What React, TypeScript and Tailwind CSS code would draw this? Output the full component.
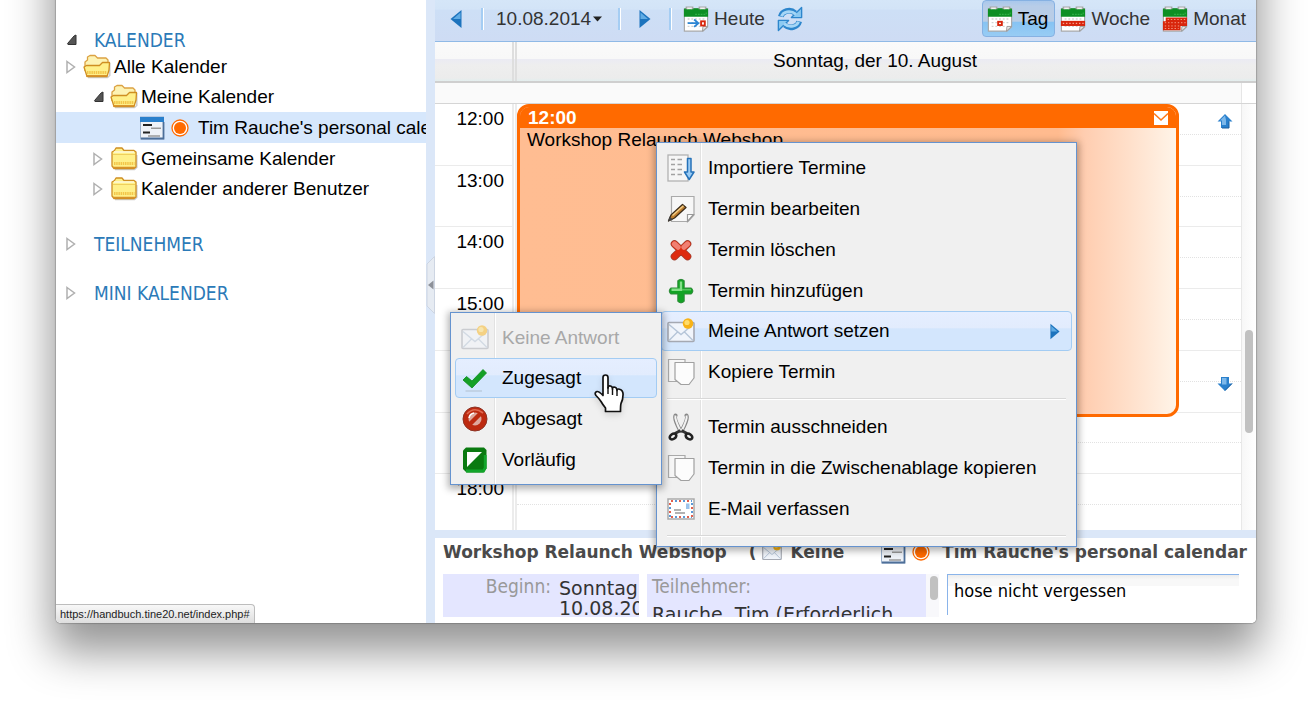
import React from "react";
import clsx from "clsx";

type IconProps = { className?: string };

/* ---------- small drawings ---------- */

function Svg({ size = 28, className, children }: { size?: number; className?: string; children: React.ReactNode }) {
  return (
    <svg width={size} height={size} viewBox="0 0 28 28" className={clsx("shrink-0", className)} aria-hidden="true">
      {children}
    </svg>
  );
}

function Expander({ open = false }: { open?: boolean }) {
  return (
    <svg width="12" height="16" viewBox="0 0 12 16" className="shrink-0" aria-hidden="true">
      {open ? (
        <path d="M11 3V12.500H3Q2 12 3 11L9 4Z" fill="#555" stroke="#333" strokeWidth="1" strokeLinejoin="round" />
      ) : (
        <path d="M2 2.500L9.500 8L2 13.500Z" fill="#fff" stroke="#b0b0b0" strokeWidth="1.500" />
      )}
    </svg>
  );
}

function Folder({ open = false }: { open?: boolean }) {
  return (
    <Svg>
      <path d="M5 24.500H24.500L26.800 22.500V10" fill="none" stroke="#aaa" strokeWidth="1.500" opacity=".6" />
      {open ? (
        <>
          <path
            d="M2 18V9L4.500 7V4L7 2.500H12L14.500 5H23L25 7V12"
            fill="#fdf3b4"
            stroke="#dca243"
            strokeWidth="1.300"
            strokeLinejoin="round"
          />
          <path
            d="M1 14L3.500 12.500H16.500L19.500 9.500H26.500L26 17L24 23.500H4Z"
            fill="#fff08a"
            stroke="#cf8f22"
            strokeWidth="1.300"
            strokeLinejoin="round"
          />
          <path d="M4 19.500H24" stroke="#f3c64a" strokeWidth="3" strokeDasharray="1.500 .7" />
          <path d="M3 22.800H24" stroke="#d8922a" strokeWidth="1.500" />
        </>
      ) : (
        <>
          <path
            d="M2 21V7L4.500 5.500L6 3H12L14 5.500H24L26 7V22L24 23.500H4Z"
            fill="#fff08a"
            stroke="#cf8f22"
            strokeWidth="1.300"
            strokeLinejoin="round"
          />
          <path d="M4 7H24" stroke="#fdf8d8" strokeWidth="1.600" />
          <path d="M3 9.500H25" stroke="#efcf5e" strokeWidth="1" />
          <path d="M4 18.500H24.500" stroke="#f3c64a" strokeWidth="3" strokeDasharray="1.500 .7" />
          <path d="M3 22.500H25" stroke="#d8922a" strokeWidth="1.500" />
        </>
      )}
    </Svg>
  );
}

function CalendarForm() {
  return (
    <svg width="26" height="24" viewBox="0 0 26 24" className="shrink-0" aria-hidden="true">
      <rect x="1.500" y="1" width="23" height="22" fill="#eef2f8" stroke="#9ab0cc" strokeWidth="1" />
      <rect x="1" y="1" width="24" height="5" fill="#2a80cc" />
      <path d="M24.500 6V22.500H2" fill="none" stroke="#4d6f99" strokeWidth="1.800" />
      <path d="M4 9H13M4 16.500H11" stroke="#222" strokeWidth="2" />
      <path d="M12 12.300H22M9 20H21" stroke="#999" strokeWidth="1.600" />
    </svg>
  );
}

function ColorDot() {
  return (
    <svg width="18" height="18" viewBox="0 0 18 18" className="shrink-0" aria-hidden="true">
      <circle cx="9" cy="9" r="8" fill="#fff" stroke="#ff6a00" strokeWidth="1.300" />
      <circle cx="9" cy="9" r="6" fill="#ff6a00" />
    </svg>
  );
}

function CalendarIcon({ kind }: { kind: "today" | "day" | "week" | "month" }) {
  return (
    <Svg size={26}>
      <path d="M1.500 3H26.500V22.500L21.500 27H1.500Z" fill="#fff" stroke="#aaa" strokeWidth="1.300" />
      <path d="M26.500 22L21.500 22L21 27Z" fill="#e8e8e8" stroke="#999" strokeWidth="1" />
      <path d="M1 4Q1 2.500 3 2.500H25Q27 2.500 27 4V11.500H1Z" fill="#0d8f24" />
      <path d="M13 9H25V6.500" fill="none" stroke="#2fae45" strokeWidth="1.200" strokeDasharray="2 1" />
      <path d="M4 3.500V1.800H10V3.500M18 3.500V1.800H24V3.500" fill="none" stroke="#a8a8a8" strokeWidth="2.400" />
      <path d="M4.500 2.600H9.500M18.500 2.600H23.500" stroke="#f2f2f2" strokeWidth="1.800" />
      {kind !== "month" && (
        <path d="M5 14H23M5 18H23M5 22H20" stroke="#d2d2d2" strokeWidth="1.400" strokeDasharray="2 2" />
      )}
      {kind === "today" && (
        <>
          <path d="M5 18.500H16M12 14.500L16.500 18.500L12 22.500" fill="none" stroke="#2d86d4" strokeWidth="2" />
          <rect x="19.500" y="16.500" width="4" height="4.500" fill="#fff" stroke="#d8250c" strokeWidth="2" />
        </>
      )}
      {kind === "day" && <rect x="12" y="17" width="4" height="3.500" fill="#fff" stroke="#d8250c" strokeWidth="2" />}
      {kind === "week" && (
        <>
          <rect x="1" y="16" width="26" height="5.500" fill="#d8250c" />
          <path d="M3 18.700H26" stroke="#f6a390" strokeWidth="1.300" strokeDasharray="1.500 2" />
        </>
      )}
      {kind === "month" && (
        <>
          <path d="M4 12.500H27V21.500H20V26H1V16.500H4Z" fill="#d8250c" />
          <path d="M6 14.500H26M3 18H26M3 21.500H20M3 24.200H18" stroke="#f6a390" strokeWidth="1" strokeDasharray="1.500 2" />
        </>
      )}
    </Svg>
  );
}

function ToolbarArrow({ dir, small }: { dir: "left" | "right"; small?: boolean }) {
  return (
    <svg
      width={small ? 10 : 12}
      height={small ? 17 : 20}
      viewBox="0 0 12 20"
      preserveAspectRatio="none"
      className="shrink-0"
      aria-hidden="true"
    >
      {dir === "left" ? (
        <>
          <path d="M11.500 1V19L.5 10Z" fill="#1c73bd" />
          <path d="M10.500 3.500V10H3Z" fill="#5fabe4" />
        </>
      ) : (
        <>
          <path d="M.5 1V19L11.500 10Z" fill="#1c73bd" />
          <path d="M1.500 3.500V10H9Z" fill="#5fabe4" />
        </>
      )}
    </svg>
  );
}

function RefreshIcon() {
  return (
    <Svg size={26}>
      <g fill="none" stroke="#2d86cc" strokeWidth="6">
        <path d="M4 11.500C5.500 5.500 14 2.500 19.500 7.500" />
        <path d="M24 16.500C22.500 22.500 14 25.500 8.500 20.500" />
      </g>
      <path d="M26.500 1.500V12.500H15.500Z" fill="#8ccaf2" stroke="#2d86cc" strokeWidth="1.500" strokeLinejoin="round" />
      <path d="M1.500 26.500V15.500H12.500Z" fill="#8ccaf2" stroke="#2d86cc" strokeWidth="1.500" strokeLinejoin="round" />
      <g fill="none" stroke="#a5d6f6" strokeWidth="3">
        <path d="M4.800 11C6.500 6.500 14 3.500 20.500 9" />
        <path d="M23.200 17C21.500 21.500 14 24.500 7.500 19" />
      </g>
    </Svg>
  );
}

function ImportIcon() {
  return (
    <Svg>
      <rect x="1" y="1" width="20" height="26" fill="#f6f6f6" stroke="#b2b2b2" strokeWidth="1.300" />
      <path
        d="M4 5.500H8M10.500 5.500H15M4 10.500H8M10.500 10.500H15M4 15.500H8M10.500 15.500H15M4 20.500H8M10.500 20.500H15"
        stroke="#a2a2a2"
        strokeWidth="1.700"
      />
      <path d="M20.500 4.500H24V18H27L22.200 25.500L17.500 18H20.500Z" fill="#9ccdf5" stroke="#2672b8" strokeWidth="1.500" strokeLinejoin="round" />
    </Svg>
  );
}

function EditIcon() {
  return (
    <Svg>
      <path d="M4.500 1.500H27V20L21 26.500H4.500Z" fill="#f7f7f7" stroke="#aaa" strokeWidth="1.200" />
      <path d="M26.500 19.500H20.500V26.500Z" fill="#fff" stroke="#999" strokeWidth="1.200" />
      <path d="M1.500 26L4 20L15.500 9.500L19 12.500L7.500 23Z" fill="#c07f30" stroke="#3a2c1a" strokeWidth="1.300" strokeLinejoin="round" />
      <path d="M5.500 20.500L16.500 10.700" stroke="#f3cf88" strokeWidth="1.500" />
      <path d="M1 26.500L2.500 21.500L6 24.500Z" fill="#444" />
    </Svg>
  );
}

function DeleteIcon() {
  return (
    <Svg>
      <g strokeLinecap="round" fill="none">
        <path d="M7.500 8L20.500 20.500M20.500 8L7.500 20.500" stroke="#9c3f31" strokeWidth="7.600" />
        <path d="M7.500 8L20.500 20.500M20.500 8L7.500 20.500" stroke="#dd2c10" strokeWidth="6.200" />
        <path d="M7.500 8L11 11.200M20.500 8L17 11.200" stroke="#f08072" strokeWidth="5.200" />
      </g>
    </Svg>
  );
}

function AddIcon() {
  return (
    <Svg>
      <path
        d="M10.800 3.500Q14 1 17.200 3.500V11H24.500Q27.500 14 24.500 17H17.200V24.500Q14 27.500 10.800 24.500V17H3.500Q.8 14 3.500 11H10.800Z"
        fill="#12a324"
        stroke="#2f8a39"
        strokeWidth="1"
      />
      <path d="M14 4.500V12.700H4.500" fill="none" stroke="#84e088" strokeWidth="2.400" />
      <path d="M15 12.700H24" stroke="#56c45e" strokeWidth="1.600" />
    </Svg>
  );
}

function ReplyIcon({ size = 28, className }: IconProps & { size?: number }) {
  return (
    <Svg size={size} className={className}>
      <rect x="1" y="5.500" width="26" height="19" rx="1" fill="#f1f5fb" stroke="#a5a9b2" strokeWidth="1.600" />
      <path d="M2 7.500L14 17.500L26 7.500M2 23.500L10.500 15M26 23.500L17.500 15" fill="none" stroke="#b5c5d8" strokeWidth="1.400" />
      <circle cx="21" cy="6.500" r="5.200" fill="#f8b318" />
      <circle cx="20" cy="5.500" r="2.600" fill="#ffdc6b" />
    </Svg>
  );
}

function CopyIcon() {
  return (
    <Svg>
      <path d="M1.500 1.500H18V23.500H1.500Z" fill="#f6f6f6" stroke="#aaa" strokeWidth="1.200" />
      <path d="M8 4.500H27V20L22 26.500H14L8 21.500Z" fill="#fcfcfc" stroke="#a0a0a0" strokeWidth="1.200" strokeLinejoin="round" />
    </Svg>
  );
}

function CutIcon() {
  return (
    <Svg>
      <path d="M8.500 2.500C7 5 9 10 13.500 18M19.500 2.500C21 5 19 10 14.500 18" fill="none" stroke="#888" strokeWidth="4" strokeLinecap="round" />
      <path d="M8.500 2.500C7.500 5 9.500 10 13.500 18M19.500 2.500C20.500 5 18.500 10 14.500 18" fill="none" stroke="#f2f2f2" strokeWidth="2" />
      <path d="M13.500 17.500L8 20.500M14.500 17.500L20 20.500" stroke="#333" strokeWidth="3" />
      <ellipse cx="6" cy="23.500" rx="3.600" ry="2.500" transform="rotate(-35 6 23.500)" fill="none" stroke="#222" strokeWidth="2.600" />
      <ellipse cx="22" cy="23.500" rx="3.600" ry="2.500" transform="rotate(35 22 23.500)" fill="none" stroke="#222" strokeWidth="2.600" />
    </Svg>
  );
}

function MailIcon() {
  return (
    <Svg>
      <rect x="1" y="4" width="26" height="20" fill="#fff" stroke="#aaa" strokeWidth="1.500" />
      <path d="M4 6H25M4 22H25" stroke="#e2604d" strokeWidth="2" strokeDasharray="2 6" />
      <path d="M8 6H25M8 22H25" stroke="#5a98d8" strokeWidth="2" strokeDasharray="2 6" />
      <path d="M3 8V22M25 12V22" stroke="#e2604d" strokeWidth="2" strokeDasharray="2 6" />
      <path d="M3 12V22M25 8V22" stroke="#5a98d8" strokeWidth="2" strokeDasharray="2 6" />
      <path d="M7 15H14M8 18H18" stroke="#999" strokeWidth="1.400" />
      <rect x="19" y="8.500" width="3.500" height="5.500" fill="#9cc4ec" />
    </Svg>
  );
}

function AcceptIcon() {
  return (
    <Svg>
      <path d="M2 16L5.500 12.500L11 17L22 5.500L25.500 9L11 24Z" fill="#14a026" stroke="#0c8a1c" strokeWidth=".8" strokeLinejoin="round" />
      <path d="M4.500 27H21" stroke="#b8c6d8" strokeWidth="1.200" />
    </Svg>
  );
}

function DeclineIcon() {
  return (
    <Svg>
      <circle cx="14" cy="14" r="12" fill="#bd2a10" stroke="#8d3426" strokeWidth="1" />
      <circle cx="14" cy="14" r="6.500" fill="#dfa79d" />
      <path d="M8 13A6 6 0 0 1 13 8" fill="none" stroke="#fff" strokeWidth="1.500" />
      <path d="M9 19L19 9" stroke="#bd2a10" strokeWidth="4.500" />
      <path d="M6 9Q13 1 22 8" fill="none" stroke="#e06a52" strokeWidth="1.600" />
    </Svg>
  );
}

function TentativeIcon() {
  return (
    <Svg>
      <path d="M5 1.500H23L25.500 4V22.500L22.500 26.500H5.500L2 23V4.500Z" fill="#0a7a10" />
      <path d="M5 25H22.500L24.200 22V9" fill="none" stroke="#12a52a" strokeWidth="2.800" />
      <path d="M6 6H21L6 21Z" fill="#fdfffd" />
    </Svg>
  );
}

function ScrollHint({ dir }: { dir: "up" | "down" }) {
  return (
    <svg width="16" height="16" viewBox="0 0 16 16" aria-hidden="true">
      {dir === "up" ? (
        <>
          <path d="M8 1L15.500 8.500H12V15H4V8.500H.5Z" fill="#2a80cc" />
          <path d="M8 2.500L3 7.500H5V12H9V7Z" fill="#7db8ea" />
          <path d="M12 8.500V15H5" fill="none" stroke="#1d5f9e" strokeWidth="1" />
        </>
      ) : (
        <>
          <path d="M8 15L.5 7.500H4V1H12V7.500H15.500Z" fill="#2a80cc" />
          <path d="M5 2H9.500V8.500H5Z" fill="#7db8ea" />
          <path d="M15 7.500L8 14.500" fill="none" stroke="#1d5f9e" strokeWidth="1" />
        </>
      )}
    </svg>
  );
}

function HandCursor() {
  return (
    <svg
      width="32"
      height="40"
      viewBox="0 0 32 40"
      className="pointer-events-none absolute left-[159px] top-[374px] z-30 drop-shadow-md"
      aria-hidden="true"
    >
      <path
        d="M9 3.500Q9 1 11.500 1Q14 1 14 3.500V14Q14 11.500 16.500 12Q18.500 12.500 18.500 15Q18.500 12.500 21 13.200Q23 13.800 23 16.500Q23 14.500 25.500 15.200Q29.500 16.500 29 21Q29 26 27 29.500Q26.500 31 26.500 37.500H11.500V34Q9 31 7 27.500Q5 24.500 2 21.500Q0 18.500 3 17.500Q5 17.200 9 21.500Z"
        fill="#fff"
        stroke="#111"
        strokeWidth="1.700"
        strokeLinejoin="round"
      />
      <path d="M14 13V20M18.500 15V21M23 16.500V22" stroke="#111" strokeWidth="1.400" />
    </svg>
  );
}

/* ---------- sidebar ---------- */

function SectionTitle({ open, children }: { open?: boolean; children: React.ReactNode }) {
  return (
    <button
      type="button"
      className="flex h-6 w-full items-center gap-[17px] pl-[9px] font-['DejaVu_Sans_Condensed','DejaVu_Sans',sans-serif] text-[19px] leading-6 text-[#2b7ab8]"
    >
      <Expander open={open} />
      {children}
    </button>
  );
}

function TreeRow({ nested, open, folderOpen, label }: { nested?: boolean; open?: boolean; folderOpen?: boolean; label: string }) {
  return (
    <li>
      <button type="button" className={clsx("flex h-[30px] w-full items-center whitespace-nowrap", nested ? "pl-9" : "pl-[9px]")}>
        <Expander open={open} />
        <span className="ml-1.5 mr-[3px] flex">
          <Folder open={folderOpen} />
        </span>
        {label}
      </button>
    </li>
  );
}

function Sidebar() {
  return (
    <nav className="w-[370px] shrink-0 overflow-hidden bg-white pt-7">
      <SectionTitle open>KALENDER</SectionTitle>
      <ul className="mb-7">
        <TreeRow label="Alle Kalender" folderOpen />
        <TreeRow label="Meine Kalender" nested open folderOpen />
        <li className="mb-px bg-[#d6e7fc]">
          <button type="button" className="flex h-[31px] w-full items-center whitespace-nowrap pl-[83px]">
            <CalendarForm />
            <span className="ml-1.5 mr-[9px] flex">
              <ColorDot />
            </span>
            Tim Rauche's personal calendar
          </button>
        </li>
        <TreeRow label="Gemeinsame Kalender" nested />
        <TreeRow label="Kalender anderer Benutzer" nested />
      </ul>
      <SectionTitle>TEILNEHMER</SectionTitle>
      <div className="h-[25px]" />
      <SectionTitle>MINI KALENDER</SectionTitle>
    </nav>
  );
}

function Splitter() {
  return (
    <div className="flex w-[9px] shrink-0 flex-col bg-[#dbe7f8] pt-64">
      <button type="button" aria-label="Seitenleiste einklappen">
        <svg width="9" height="58" viewBox="0 0 9 58" aria-hidden="true">
          <path d="M8.500 .5L1 8V50L8.500 57.500Z" fill="#e6ebf2" stroke="#cdd5e2" strokeWidth="1" />
          <path d="M7.500 24.500V33.500L2 29Z" fill="#8d9199" />
        </svg>
      </button>
    </div>
  );
}

/* ---------- toolbar ---------- */

function Divider() {
  return <span className="h-[22px] w-[3px] shrink-0 border-l-2 border-r border-l-[#a5cdf3] border-r-white" />;
}

function ViewButton({ kind, label, active }: { kind: "day" | "week" | "month"; label: string; active?: boolean }) {
  return (
    <button
      type="button"
      aria-pressed={!!active}
      className={clsx(
        "flex h-[37px] items-center gap-[5px] rounded border pl-1 pr-1.5",
        active
          ? "border-[#86b1e2] bg-[linear-gradient(#a9c8ec_0%,#b8cde8_15%,#b9cde6_58%,#86c3f3_60%,#98ccf4_100%)] text-black"
          : "border-transparent",
      )}
    >
      <CalendarIcon kind={kind} />
      {label}
    </button>
  );
}

function Toolbar() {
  return (
    <div className="flex h-[42px] shrink-0 items-center border-b border-[#8fb9e6] bg-[linear-gradient(#d5e6f8_0%,#d3e4f7_22%,#cddff6_25%,#cedcf4_100%)] pb-1 text-[#333]">
      <button type="button" aria-label="Zurück" className="ml-[15px] flex">
        <ToolbarArrow dir="left" />
      </button>
      <span className="ml-[19px] flex">
        <Divider />
      </span>
      <button type="button" className="ml-3 flex items-center gap-0.5">
        10.08.2014
        <svg width="9" height="6" viewBox="0 0 9 6" aria-hidden="true">
          <path d="M0 .5H9L4.500 5.500Z" fill="#222" />
        </svg>
      </button>
      <span className="ml-4 flex">
        <Divider />
      </span>
      <button type="button" aria-label="Vor" className="ml-[18px] flex">
        <ToolbarArrow dir="right" />
      </button>
      <span className="ml-[18px] flex">
        <Divider />
      </span>
      <button type="button" className="ml-[11px] flex items-center gap-[5px]">
        <CalendarIcon kind="today" />
        Heute
      </button>
      <button type="button" aria-label="Aktualisieren" className="ml-3 flex">
        <RefreshIcon />
      </button>
      <div className="ml-auto flex pr-[3px]">
        <ViewButton kind="day" label="Tag" active />
        <ViewButton kind="week" label="Woche" />
        <ViewButton kind="month" label="Monat" />
      </div>
    </div>
  );
}

/* ---------- day view ---------- */

const hours = ["12:00", "13:00", "14:00", "15:00", "16:00", "17:00", "18:00"];

function DayView() {
  return (
    <section className="flex min-h-0 flex-1 flex-col">
      <div className="flex h-[41px] shrink-0 border-b-2 border-[#cfcfcf] bg-[linear-gradient(#fafafa_0%,#f8f8f8_43%,#ebebf3_44%,#eeeeee_60%,#ececec_92%,#e3eeee_100%)]">
        <div className="w-[79px] shrink-0 border-r-2 border-[#dedede]" />
        <h2 className="ml-px flex-1 border-l-2 border-[#dedede] pt-2 text-center leading-[22px]">Sonntag, der 10. August</h2>
        <div className="w-[23px]" />
      </div>
      <div className="flex h-[21px] shrink-0 justify-end border-b border-[#d5d5d5] bg-[#fafafa]">
        <div className="w-[15px] border-l border-[#e6e6e6] bg-white" />
      </div>
      <div className="flex min-h-0 flex-1 overflow-hidden">
        <div className="relative flex h-[432px] flex-1 flex-col">
          {hours.map((hour) => (
            <div key={hour} className="flex flex-1">
              <div className="w-[79px] border-b border-r-2 border-b-[#ebebeb] border-r-[#ececec] pr-2 pt-1 text-right leading-[22px]">
                {hour}
              </div>
              <div className="ml-px flex flex-1 flex-col border-b border-l-2 border-b-[#ebebeb] border-l-[#ececec]">
                <div className="flex-1 border-b border-dotted border-[#e2e2e2]" />
                <div className="flex-1" />
              </div>
            </div>
          ))}
          <article className="absolute left-[82px] right-[62px] top-0 flex h-[313px] flex-col overflow-hidden rounded-xl border-[3px] border-[#ff6a00] bg-[linear-gradient(90deg,#ffbd92_0%,#ffbb8f_82%,#ffcdb0_86%,#ffe0cb_93%,#fff4e8_100%)]">
            <header className="flex h-[21px] shrink-0 items-center justify-between bg-[#ff6a00] pl-2 pr-[8px] font-bold text-white">
              <span className="leading-[21px]">12:00</span>
              <svg width="14" height="14" viewBox="0 0 14 14" aria-hidden="true">
                <path d="M0 0H14V14H0Z" fill="#fff" />
                <path d="M0 2.500L7 9L14 2.500" fill="none" stroke="#ff7a1a" strokeWidth="1.600" />
              </svg>
            </header>
            <p className="pl-[7px] pt-px leading-[22px]">Workshop Relaunch Webshop</p>
          </article>
          <button type="button" aria-label="Frühere Termine" className="absolute right-2 top-[9px]">
            <ScrollHint dir="up" />
          </button>
          <button type="button" aria-label="Spätere Termine" className="absolute right-2 top-[272px]">
            <ScrollHint dir="down" />
          </button>
        </div>
        <div className="w-[15px] shrink-0 border-l border-[#e8e8e8] bg-[linear-gradient(90deg,#f7f7f7,#ffffff)] pl-[3px] pt-[226px]">
          <div className="h-[103px] w-2 rounded-full bg-[#c1c1c1]" />
        </div>
      </div>
    </section>
  );
}

/* ---------- details ---------- */

function Details() {
  return (
    <section className="h-[93px] shrink-0 overflow-hidden border-t-8 border-[#dbe7f8] bg-white px-2 font-['DejaVu_Sans',sans-serif] text-[#333]">
      <div className="flex h-9 items-center justify-between whitespace-nowrap pb-2 pr-px text-[17px] font-bold text-[#4a4a4a]">
        <span className="flex items-center">
          Workshop Relaunch Webshop
          <span className="ml-[22px] mr-1.5">(</span>
          <ReplyIcon size={20} />
          <span className="ml-2">Keine</span>
        </span>
        <span className="flex items-center">
          <CalendarForm />
          <span className="ml-1.5 mr-3 flex">
            <ColorDot />
          </span>
          Tim Rauche's personal calendar
        </span>
      </div>
      <div className="flex h-[43px] gap-2">
        <dl className="flex w-[196px] shrink-0 justify-end overflow-hidden bg-[#e4e6ff]">
          <dt className="mr-2 font-['DejaVu_Sans_Condensed','DejaVu_Sans',sans-serif] text-[19px] leading-6 text-[#999]">Beginn:</dt>
          <dd className="w-20 shrink-0 overflow-hidden whitespace-nowrap pt-1 text-[19px] leading-5">
            Sonntag,
            <br />
            10.08.2014
          </dd>
        </dl>
        <div className="flex flex-1 justify-between overflow-hidden bg-[#e4e6ff]">
          <div className="whitespace-nowrap pl-[5px]">
            <h3 className="font-['DejaVu_Sans_Condensed','DejaVu_Sans',sans-serif] text-[19px] leading-6 text-[#999]">Teilnehmer:</h3>
            <p className="pt-1 text-[19px] leading-6">Rauche, Tim (Erforderlich</p>
          </div>
          <div className="w-[13px] shrink-0 bg-[#f8f8fb] pl-1 pt-0.5">
            <div className="h-6 w-2 rounded-full bg-[#c1c1c1]" />
          </div>
        </div>
        <textarea
          aria-label="Beschreibung"
          defaultValue="hose nicht vergessen"
          className="mr-[9px] h-[41px] w-[292px] shrink-0 resize-none overflow-hidden border-l border-t border-[#8ab4ea] bg-[linear-gradient(#ececec_0px,#f8f8f8_5px,#f8f8f8_11px,#ffffff_11px)] px-1.5 py-1 font-['DejaVu_Sans_Condensed','DejaVu_Sans',sans-serif] text-lg leading-6 text-black outline-none"
        />
      </div>
    </section>
  );
}

/* ---------- menus ---------- */

function MenuItem({
  icon,
  label,
  active,
  disabled,
  arrow,
}: {
  icon: React.ReactNode;
  label: string;
  active?: boolean;
  disabled?: boolean;
  arrow?: boolean;
}) {
  return (
    <li role="none">
      <button
        type="button"
        role="menuitem"
        disabled={disabled}
        className={clsx(
          "flex w-full items-center gap-[13px] whitespace-nowrap rounded-sm border pl-[5px] pr-[11px] text-left",
          active
            ? "h-10 border-[#a3ccf3] bg-[linear-gradient(#e5eeff_0%,#e2ecfd_42%,#d3e6fd_44%,#d3e6fd_100%)]"
            : "h-[41px] border-transparent",
          disabled && "text-[#a8a8a8]",
        )}
      >
        {icon}
        <span className="flex-1">{label}</span>
        {arrow && <ToolbarArrow dir="right" small />}
      </button>
    </li>
  );
}

function MenuSeparator() {
  return <li role="separator" className="mx-1.5 my-1.5 h-0.5 border-b border-t border-b-white border-t-[#d8d8d8]" />;
}

const menuSurface =
  "absolute border border-[#6593cf] px-1 pt-1 shadow-[0_2px_7px_2px_rgba(0,0,0,0.3)] bg-[linear-gradient(90deg,#f0f0f0_43px,#e2e2e2_43px,#e2e2e2_44px,#ffffff_44px,#ffffff_45px,#f0f0f0_45px)]";

function ContextMenu() {
  return (
    <ul role="menu" aria-label="Termin" className={clsx(menuSurface, "left-[221px] top-[142px] z-10 w-[421px] pb-[3px]")}>
      <MenuItem icon={<ImportIcon />} label="Importiere Termine" />
      <MenuItem icon={<EditIcon />} label="Termin bearbeiten" />
      <MenuItem icon={<DeleteIcon />} label="Termin löschen" />
      <MenuItem icon={<AddIcon />} label="Termin hinzufügen" />
      <MenuItem icon={<ReplyIcon />} label="Meine Antwort setzen" active arrow />
      <MenuItem icon={<CopyIcon />} label="Kopiere Termin" />
      <MenuSeparator />
      <MenuItem icon={<CutIcon />} label="Termin ausschneiden" />
      <MenuItem icon={<CopyIcon />} label="Termin in die Zwischenablage kopieren" />
      <MenuItem icon={<MailIcon />} label="E-Mail verfassen" />
      <MenuSeparator />
    </ul>
  );
}

function ReplyMenu() {
  return (
    <ul
      role="menu"
      aria-label="Meine Antwort setzen"
      className={clsx(menuSurface, "left-[15px] top-[312px] z-20 w-[212px] pb-1")}
    >
      <MenuItem icon={<ReplyIcon className="opacity-50" />} label="Keine Antwort" disabled />
      <MenuItem icon={<AcceptIcon />} label="Zugesagt" active />
      <MenuItem icon={<DeclineIcon />} label="Abgesagt" />
      <MenuItem icon={<TentativeIcon />} label="Vorläufig" />
    </ul>
  );
}

/* ---------- page ---------- */

export default function App() {
  return (
    <div className="flex h-screen overflow-hidden bg-white px-14 pb-20 font-['Liberation_Sans',Arial,sans-serif] text-[19px] leading-6 text-black">
      <div className="relative -mt-20 flex min-w-0 flex-1 rounded-b-[5px] bg-white pt-20 shadow-[0_0_1px_1px_rgba(0,0,0,0.18),0_25px_44px_4px_rgba(0,0,0,0.42)]">
        <div className="flex min-w-0 flex-1 overflow-hidden rounded-b-[5px]">
          <Sidebar />
          <Splitter />
          <main className="relative flex min-w-0 flex-1 flex-col bg-white">
            <Toolbar />
            <DayView />
            <Details />
            <ContextMenu />
            <ReplyMenu />
            <HandCursor />
          </main>
        </div>
        <div className="absolute bottom-0 left-0 rounded-bl-[5px] rounded-tr border-r border-t border-[#bdbdbd] bg-[linear-gradient(#f8f8f8,#dedede)] px-1 text-[11px] leading-[18px] text-[#222]">
          https://handbuch.tine20.net/index.php#
        </div>
      </div>
    </div>
  );
}
